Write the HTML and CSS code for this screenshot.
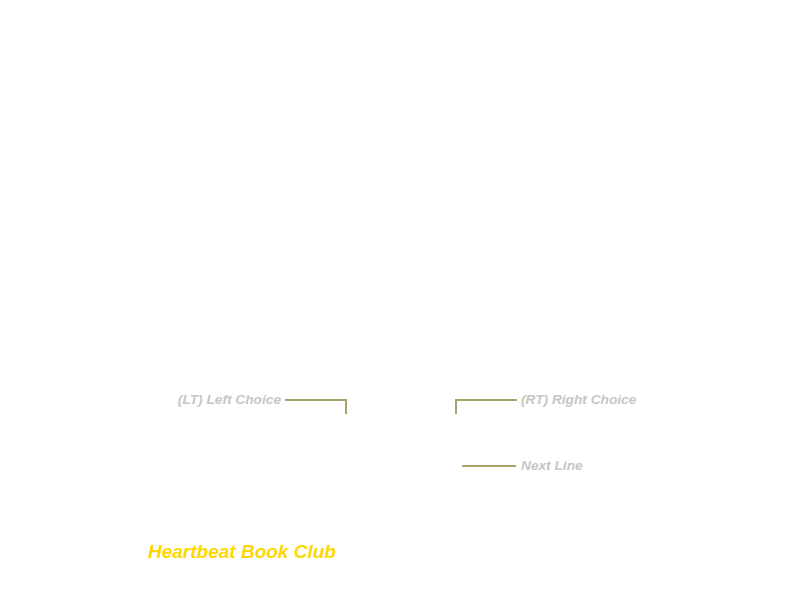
FILE: index.html
```html
<!DOCTYPE html>
<html>
<head>
<meta charset="utf-8">
<link rel="stylesheet" href="styles.css">
</head>
<body>
<div class="stage">
  <div class="choices">
    <div class="choice-left">
      <span class="label">(LT) Left Choice</span>
      <span class="connector connector-left"></span>
    </div>
    <div class="choice-right">
      <span class="connector connector-right"></span>
      <span class="label label-right">(RT) Right Choice</span>
    </div>
  </div>
  <div class="next">
    <span class="next-line"></span>
    <span class="label label-next">Next Line</span>
  </div>
  <div class="title">Heartbeat Book Club</div>
</div>
</body>
</html>
```

FILE: styles.css
```css
html, body {
  margin: 0;
  padding: 0;
  background: #ffffff;
}
.stage {
  width: 800px;
  height: 600px;
  box-sizing: border-box;
  padding-top: 392px;
  font-family: "Liberation Sans", Arial, sans-serif;
  font-weight: bold;
  font-style: italic;
}
.choices {
  display: flex;
  align-items: flex-start;
}
.choice-left {
  width: 347px;
  display: flex;
  justify-content: flex-end;
  align-items: flex-start;
}
.choice-right {
  margin-left: 108px;
  display: flex;
  align-items: flex-start;
}
.label {
  font-size: 13.7px;
  line-height: 16px;
  color: #c6c6c6;
  white-space: nowrap;
}
.connector {
  display: block;
  margin-top: 7px;
  width: 60px;
  height: 13px;
  border-top: 2px solid #a6a46a;
}
.connector-left {
  margin-left: 4px;
  border-right: 2px solid #a6a46a;
}
.connector-right {
  border-left: 2px solid #a6a46a;
}
.label-right {
  margin-left: 4px;
}
.next {
  margin-top: 44px;
  display: flex;
  align-items: flex-start;
}
.next-line {
  display: block;
  margin-left: 462px;
  margin-top: 7px;
  width: 54px;
  height: 2px;
  background: #a6a46a;
}
.label-next {
  margin-left: 5px;
}
.title {
  margin-top: 67px;
  margin-left: 148px;
  font-size: 19px;
  line-height: 22px;
  color: #ffd700;
}
```
